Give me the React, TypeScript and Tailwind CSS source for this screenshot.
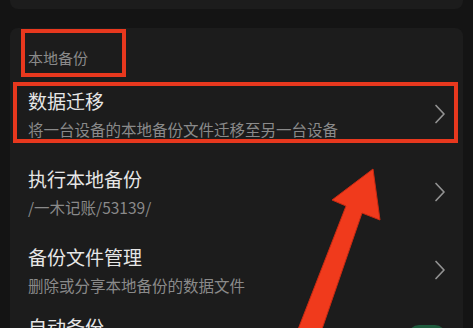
import React from "react";

const rows = [
  { title: "数据迁移", sub: "将一台设备的本地备份文件迁移至另一台设备" },
  { title: "执行本地备份", sub: "/一木记账/53139/" },
  { title: "备份文件管理", sub: "删除或分享本地备份的数据文件" },
];

function Chevron() {
  return (
    <svg width="12" height="20" viewBox="0 0 12 20" className="shrink-0">
      <polyline
        points="2,1.5 10,10 2,18.5"
        fill="none"
        stroke="#929292"
        strokeWidth="1.7"
        strokeLinecap="round"
        strokeLinejoin="round"
      />
    </svg>
  );
}

export default function App() {
  return (
    <div
      className="relative h-[328px] w-[473px] overflow-hidden bg-[#141414]"
      style={{ fontFamily: '"Noto Sans CJK SC", "Noto Sans", sans-serif' }}
    >
      {/* previous card edge */}
      <div className="mx-[10px] h-[9px] rounded-b-lg bg-[#1c1c1c]" />

      {/* local backup card */}
      <div className="mx-[10px] mt-[19px] rounded-t-lg bg-[#1c1c1c] pl-[18px] pr-[17px] pt-[20px]">
        <div className="h-[20px] text-[15px] leading-[20px] text-[#8a8a8a]">本地备份</div>
        <div className="mt-[7px]">
          {rows.map((r) => (
            <div key={r.title} className="flex h-[78px] items-center justify-between">
              <div className="flex flex-col gap-[5px]">
                <span className="text-[19px] leading-[24px] text-[#e6e6e6]">{r.title}</span>
                <span className="text-[15.5px] leading-[22px] text-[#8a8a8a]">{r.sub}</span>
              </div>
              <Chevron />
            </div>
          ))}
          <div className="flex h-[78px] items-start justify-between pt-[6px]">
            <span className="text-[19px] leading-[24px] text-[#e6e6e6]">自动备份</span>
            <div className="mt-[10px] h-[22px] w-[38px] rounded-full bg-[#1f5c3e]" />
          </div>
        </div>
      </div>

      {/* annotations */}
      <div className="pointer-events-none absolute left-[21px] top-[29px] h-[48px] w-[105px] border-4 border-[#e8381e]" />
      <div className="pointer-events-none absolute left-[13px] top-[82px] h-[61px] w-[445px] border-4 border-[#e8381e]" />
      <svg className="pointer-events-none absolute left-0 top-0" width="473" height="328" viewBox="0 0 473 328">
        <polygon
          points="373,169 380,220 362,213 321,332 297,332 346,206 332,200"
          fill="#f03a1c"
          stroke="#c92a12"
          strokeWidth="1"
          strokeLinejoin="round"
        />
      </svg>
    </div>
  );
}
